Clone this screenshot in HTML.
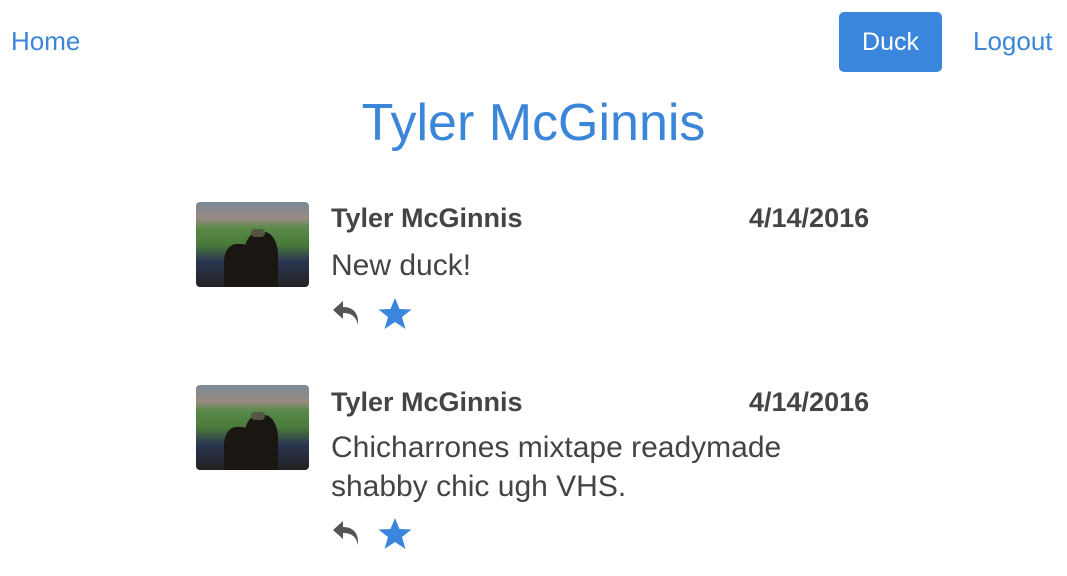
<!DOCTYPE html>
<html><head><meta charset="utf-8"><style>
body{margin:0;width:1067px;height:576px;background:#fff;font-family:"Liberation Sans",sans-serif;position:relative;overflow:hidden}
.a{position:absolute}
.nav{color:#3b86d8;font-size:26px}
.btn{left:839px;top:12px;width:103px;height:60px;background:#3b86dd;border-radius:5px;color:#fff;font-size:25px;line-height:60px;text-align:center}
.title{left:0;width:1067px;text-align:center;top:93px;font-size:52px;color:#3b86d8}
.img{width:113px;height:85px;border-radius:4px;overflow:hidden;background:linear-gradient(180deg,#7a8a95 0%,#9a8a80 20%,#5a8a4a 30%,#4a7a3a 50%,#2a3550 70%,#222 100%)}
.img .p{position:absolute;background:#1a1612;border-radius:40% 40% 0 0}
.name{font-size:27px;font-weight:bold;color:#444}
.txt{font-size:30px;color:#444;line-height:39px}
</style></head><body>
<div class="a nav" style="left:11px;top:26px">Home</div>
<div class="a btn">Duck</div>
<div class="a nav" style="left:973px;top:26px">Logout</div>
<div class="a title">Tyler McGinnis</div>

<div class="a img" style="left:196px;top:202px"><div class="p" style="left:28px;top:42px;width:30px;height:45px"></div><div class="p" style="left:48px;top:30px;width:34px;height:57px"></div><div class="a" style="left:55px;top:27px;width:14px;height:8px;background:#554;border-radius:4px"></div></div>
<div class="a name" style="left:331px;top:203px">Tyler McGinnis</div>
<div class="a name" style="left:749px;top:203px">4/14/2016</div>
<div class="a txt" style="left:331px;top:246px">New duck!</div>
<svg class="a" style="left:331px;top:299px" width="32" height="30" viewBox="0 0 32 30"><path d="M12 2 L2 11 L12 20 L12 14 C20 14 25 17 27 26 C28 14 22 8 12 8 Z" fill="#555"/></svg>
<svg class="a" style="left:377px;top:297px" width="36" height="34" viewBox="0 0 36 34"><path d="M18 1 L22.5 12 L34.5 12.5 L25 20 L28.5 32 L18 25 L7.5 32 L11 20 L1.5 12.5 L13.5 12 Z" fill="#3b86dd"/></svg>

<div class="a img" style="left:196px;top:385px"><div class="p" style="left:28px;top:42px;width:30px;height:45px"></div><div class="p" style="left:48px;top:30px;width:34px;height:57px"></div><div class="a" style="left:55px;top:27px;width:14px;height:8px;background:#554;border-radius:4px"></div></div>
<div class="a name" style="left:331px;top:387px">Tyler McGinnis</div>
<div class="a name" style="left:749px;top:387px">4/14/2016</div>
<div class="a txt" style="left:331px;top:428px">Chicharrones mixtape readymade<br>shabby chic ugh VHS.</div>
<svg class="a" style="left:331px;top:519px" width="32" height="30" viewBox="0 0 32 30"><path d="M12 2 L2 11 L12 20 L12 14 C20 14 25 17 27 26 C28 14 22 8 12 8 Z" fill="#555"/></svg>
<svg class="a" style="left:377px;top:517px" width="36" height="34" viewBox="0 0 36 34"><path d="M18 1 L22.5 12 L34.5 12.5 L25 20 L28.5 32 L18 25 L7.5 32 L11 20 L1.5 12.5 L13.5 12 Z" fill="#3b86dd"/></svg>
</body></html>
